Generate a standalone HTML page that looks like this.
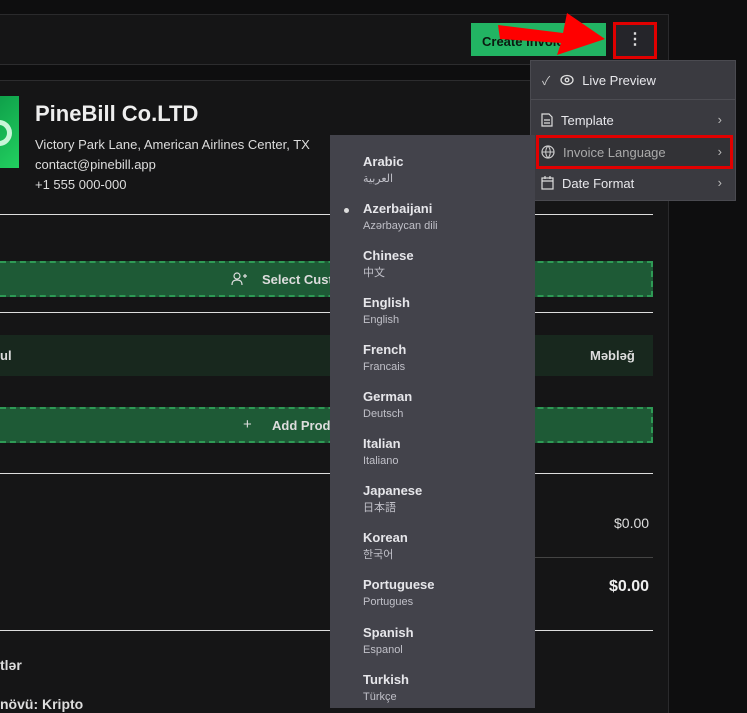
<!DOCTYPE html>
<html><head><meta charset="utf-8"><style>
*{box-sizing:border-box;margin:0;padding:0}
body{width:747px;height:713px;overflow:hidden;background:#0e0e0f;font-family:"Liberation Sans","Noto Sans CJK JP",sans-serif;position:relative;color:#eee}
.a{position:absolute}
.sub .it{position:absolute;left:33px;font-size:13px;font-weight:bold;color:#e6e6ea;line-height:15px}
.sub .it span{display:block;font-size:11px;font-weight:normal;color:#c0c0c8;margin-top:3px;line-height:14px;height:14px;overflow:visible}
.mi{position:absolute;left:0;width:205px;height:32px;font-size:13px;color:#e8e8ec;display:flex;align-items:center}
.mi svg{margin-left:10px;margin-right:8px}
.chev{position:absolute;right:14px;top:8px;font-size:13px;color:#bbb}
</style></head><body>
<div class="a" style="left:0;top:14px;width:669px;height:51px;background:#151516;border-top:1px solid #2a2a2c;border-bottom:1px solid #2c2c2e;border-right:1px solid #2a2a2c"></div>
<div class="a" style="left:0;top:80px;width:669px;height:633px;background:#151516;border-top:1px solid #2c2c2e;border-right:1px solid #2a2a2c"></div>
<div class="a" style="left:471px;top:23px;width:135px;height:33px;background:#22b463;color:#0b1a10;font-size:13px;font-weight:bold;padding:11px 0 0 11px">Create Invoice</div>
<div class="a" style="left:613px;top:22px;width:44px;height:37px;border:3px solid #e10000;background:#25252a;color:#ddd;text-align:center;font-size:16px;line-height:30px;font-weight:bold">⋮</div>
<svg class="a" style="left:495px;top:5px" width="115" height="55"><polygon points="3,20 68,28 72,8 110,34 62,50 66,38 5,34" fill="#f00"/></svg>
<div class="a" style="left:0;top:96px;width:19px;height:72px;background:linear-gradient(135deg,#0fa04a,#22d060);overflow:hidden"><div class="a" style="left:-14px;top:24px;width:26px;height:26px;border-radius:50%;border:5px solid #c9f5d8"></div></div>
<div class="a" style="left:35px;top:101px;font-size:22px;font-weight:bold;color:#eee">PineBill Co.LTD</div>
<div class="a" style="left:35px;top:135px;font-size:13px;color:#ddd;line-height:20px">Victory Park Lane, American Airlines Center, TX<br>contact@pinebill.app<br>+1 555 000-000</div>
<div class="a" style="left:0;top:214px;width:653px;height:1px;background:#ddd"></div>
<div class="a" style="left:0;top:261px;width:653px;height:36px;background:#1e5a36;border:2px dashed #2e9a55;border-left:none"></div>
<svg class="a" style="left:231px;top:272px" width="16" height="14" viewBox="0 0 16 14"><circle cx="6" cy="4" r="3" fill="none" stroke="#ddd" stroke-width="1.2"/><path d="M1 13c0-4 2-5 5-5s5 1 5 5M12 4h4M14 2v4" fill="none" stroke="#ddd" stroke-width="1.2"/></svg>
<div class="a" style="left:262px;top:272px;font-size:13px;font-weight:bold;color:#ddd">Select Customer</div>
<div class="a" style="left:0;top:312px;width:653px;height:1px;background:#ddd"></div>
<div class="a" style="left:0;top:335px;width:653px;height:41px;background:#18281e"></div>
<div class="a" style="left:0;top:348px;font-size:13px;font-weight:bold;color:#ddd">ul</div>
<div class="a" style="left:590px;top:348px;font-size:13px;font-weight:bold;color:#ddd">Məbləğ</div>
<div class="a" style="left:0;top:407px;width:653px;height:36px;background:#1e5a36;border:2px dashed #2e9a55;border-left:none"></div>
<div class="a" style="left:243px;top:416px;font-size:15px;color:#ddd">+</div>
<div class="a" style="left:272px;top:418px;font-size:13px;font-weight:bold;color:#ddd">Add Product</div>
<div class="a" style="left:0;top:473px;width:653px;height:1px;background:#ddd"></div>
<div class="a" style="left:614px;top:515px;font-size:14px;color:#ddd">$0.00</div>
<div class="a" style="left:330px;top:557px;width:323px;height:1px;background:#444"></div>
<div class="a" style="left:609px;top:578px;font-size:16px;font-weight:bold;color:#eee">$0.00</div>
<div class="a" style="left:0;top:630px;width:653px;height:1px;background:#ddd"></div>
<div class="a" style="left:0;top:657px;font-size:14px;font-weight:bold;color:#ddd">tlər</div>
<div class="a" style="left:0;top:696px;font-size:14px;font-weight:bold;color:#ddd">növü: Kripto</div>

<div class="a" style="left:530px;top:60px;width:206px;height:141px;background:#3a3a40;border:1px solid #4a4a50">
 <div class="mi" style="top:3px"><span style="margin-left:11px;color:#ccc;font-size:12px">✓</span><svg width="14" height="14" viewBox="0 0 14 14" style="margin-left:10px"><ellipse cx="7" cy="7" rx="6" ry="4.5" fill="none" stroke="#ddd" stroke-width="1.3"/><circle cx="7" cy="7" r="1.8" fill="none" stroke="#ddd" stroke-width="1.3"/></svg>Live Preview</div>
 <div class="a" style="left:0;top:38px;width:204px;height:1px;background:#4c4c52"></div>
 <div class="mi" style="top:43px"><svg width="12" height="14" viewBox="0 0 12 14"><path d="M1 1h7l3 3v9H1z M3 7h6M3 10h6" fill="none" stroke="#ddd" stroke-width="1.2"/></svg>Template<span class="chev">›</span></div>
 <div class="a" style="left:5px;top:74px;width:197px;height:34px;border:3px solid #e10000;background:#323236"></div>
 <div class="mi" style="top:75px;color:#aaa"><svg width="14" height="14" viewBox="0 0 14 14"><circle cx="7" cy="7" r="6" fill="none" stroke="#ccc" stroke-width="1.2"/><path d="M1 7h12M7 1c-3 3-3 9 0 12M7 1c3 3 3 9 0 12" fill="none" stroke="#ccc" stroke-width="1.1"/></svg>Invoice Language<span class="chev">›</span></div>
 <div class="mi" style="top:106px"><svg width="13" height="14" viewBox="0 0 13 14"><rect x="1" y="2" width="11" height="11" fill="none" stroke="#ddd" stroke-width="1.2"/><path d="M1 5h11M4 0v3M9 0v3" stroke="#ddd" stroke-width="1.2"/></svg>Date Format<span class="chev">›</span></div>
</div>

<div class="a sub" style="left:330px;top:135px;width:205px;height:573px;background:#43434b">
 <div class="it" style="top:19px">Arabic<span>العربية</span></div>
 <div class="a" style="left:14px;top:73px;width:5px;height:5px;border-radius:50%;background:#ddd"></div>
 <div class="it" style="top:66px">Azerbaijani<span>Azərbaycan dili</span></div>
 <div class="it" style="top:113px">Chinese<span>中文</span></div>
 <div class="it" style="top:160px">English<span>English</span></div>
 <div class="it" style="top:207px">French<span>Francais</span></div>
 <div class="it" style="top:254px">German<span>Deutsch</span></div>
 <div class="it" style="top:301px">Italian<span>Italiano</span></div>
 <div class="it" style="top:348px">Japanese<span>日本語</span></div>
 <div class="it" style="top:395px">Korean<span>한국어</span></div>
 <div class="it" style="top:442px">Portuguese<span>Portugues</span></div>
 <div class="it" style="top:490px">Spanish<span>Espanol</span></div>
 <div class="it" style="top:537px">Turkish<span>Türkçe</span></div>
</div>
</body></html>
